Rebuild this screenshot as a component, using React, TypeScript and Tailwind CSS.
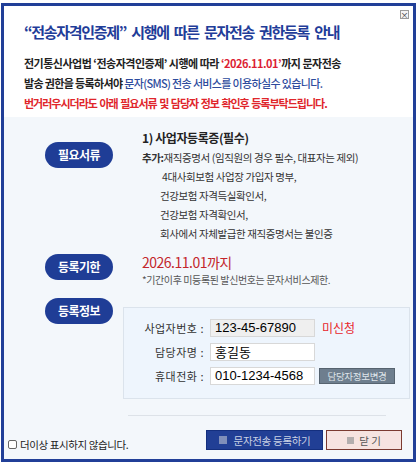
import React from 'react';

const KR = "font-['Noto_Sans_CJK_KR',sans-serif]";

const Pill = ({ label }: { label: string }) => (
  <div className="w-[68px] h-[26px] rounded-full bg-[#1f3d96] text-white text-[12px] font-bold flex items-center justify-center tracking-[-0.5px]">
    {label}
  </div>
);

const Field = ({
  label,
  value,
  gray,
  mono,
}: {
  label: string;
  value: string;
  gray?: boolean;
  mono?: boolean;
}) => (
  <div className="flex items-center">
    <div className="w-[76px] text-right text-[11px] text-[#333] pr-[6px] tracking-[0.5px]">
      {label}
    </div>
    <div
      className={`w-[105px] h-[18px] flex items-center pl-[4px] border border-[#d8d8d8] text-[13px] text-black ${
        gray ? 'bg-[#efefef]' : 'bg-white'
      } ${mono ? "font-['Liberation_Sans',sans-serif]" : ''}`}
    >
      {value}
    </div>
  </div>
);

export default function App() {
  return (
    <div className={`w-[419px] h-[465px] bg-white overflow-hidden ${KR}`}>
      <div className="h-[3px]" />
      <div className="ml-[1px] w-[415px] h-[459px] border-[3px] border-[#213f98] flex flex-col">
        {/* header */}
        <div className="relative bg-white h-[111px] pl-[20px] pt-[14px]">
          <button className="absolute top-[4px] right-[4px] w-[9px] h-[9px] border border-[#9a9a9a] bg-[#f4f4f4] flex items-center justify-center text-[8px] leading-none text-[#333]">
            ×
          </button>
          <h1 className="text-[15px] leading-[24px] font-bold text-[#1f3d99] tracking-[-1.3px] [word-spacing:3px]">
            “전송자격인증제” 시행에 따른 문자전송 권한등록 안내
          </h1>
          <div className="mt-[9px] text-[11px] leading-[20px] font-semibold text-[#222] tracking-[-0.5px]">
            <p>
              전기통신사업법 ‘전송자격인증제’ 시행에 따라{' '}
              <span className="text-[#dc1f34]">‘2026.11.01’</span>까지 문자전송
            </p>
            <p className="tracking-[-0.65px]">
              발송 권한을 등록하셔야{' '}
              <span className="text-[#2d4b9d] font-medium">문자(SMS) 전송 서비스를 이용하실수 있습니다.</span>
            </p>
            <p className="text-[#e0262b] tracking-[-1px] [word-spacing:1px]">
              번거러우시더라도 아래 필요서류 및 담당자 정보 확인후 등록부탁드립니다.
            </p>
          </div>
        </div>

        {/* body */}
        <div className="flex-1 bg-[#f3f7fb] flex flex-col">
          <div className="flex pt-[12px]">
            <div className="w-[138px] pl-[41px] pt-[13px]">
              <Pill label="필요서류" />
            </div>
            <div className="text-[10.5px] leading-[19px] text-[#333] tracking-[-0.4px]">
              <p className="text-[12px] font-bold text-[#222] leading-[17px] mb-[2px]">1) 사업자등록증(필수)</p>
              <p>
                <span className="font-bold">추가:</span>재직증명서 (임직원의 경우 필수, 대표자는 제외)
              </p>
              <p className="pl-[20px]">4대사회보험 사업장 가입자 명부,</p>
              <p className="pl-[18px]">건강보험 자격득실확인서,</p>
              <p className="pl-[18px]">건강보험 자격확인서,</p>
              <p className="pl-[18px]">회사에서 자체발급한 재직증명서는 불인증</p>
            </div>
          </div>

          <div className="flex mt-[10px]">
            <div className="w-[138px] pl-[41px] pt-[1px]">
              <Pill label="등록기한" />
            </div>
            <div>
              <p className="text-[14px] leading-[18px] text-[#c3262b] tracking-[-0.5px]">2026.11.01까지</p>
              <p className="text-[10px] leading-[18px] text-[#555] tracking-[-0.4px]">
                *기간이후 미등록된 발신번호는 문자서비스제한.
              </p>
            </div>
          </div>

          <div className="flex mt-[9px]">
            <div className="w-[119px] pl-[41px]">
              <Pill label="등록정보" />
            </div>
            <div className="mt-[9px] w-[287px] h-[92px] bg-[#eef5fd] border border-[#dbe3ec] pl-[10px] pt-[11px] flex flex-col gap-[6px]">
              <div className="flex items-center">
                <Field label="사업자번호 :" value="123-45-67890" gray mono />
                <span className="ml-[7px] text-[12px] text-[#e8262c]">미신청</span>
              </div>
              <Field label="담당자명 :" value="홍길동" />
              <div className="flex items-center">
                <Field label="휴대전화 :" value="010-1234-4568" mono />
                <button className="ml-[4px] w-[76px] h-[16px] bg-[#6e7e8e] border border-[#56636f] text-[9.5px] text-[#dfe5ea] flex items-center justify-center tracking-[-0.3px]">
                  담당자정보변경
                </button>
              </div>
            </div>
          </div>

          <div className="ml-[124px] mr-[27px] mt-[16px] h-px bg-[#dde2e8]" />

          <div className="flex items-center mt-[12px] pl-[4px] pr-[11px]">
            <label className="flex items-center gap-[3px] text-[10.5px] text-[#222] tracking-[-0.4px] mt-[9px]">
              <span className="w-[9px] h-[9px] border border-[#666] rounded-[2px] bg-white" />
              더이상 표시하지 않습니다.
            </label>
            <div className="ml-auto flex gap-[3px]">
              <button className="w-[117px] h-[20px] bg-[#213f95] border border-[#142f7e] flex items-center justify-center gap-[7px] text-[10.5px] text-[#c9d1e4] tracking-[-0.3px]">
                <span className="w-[8px] h-[8px] bg-[#7f8fba]" />
                문자전송 등록하기
              </button>
              <button className="w-[76px] h-[20px] bg-[#f6e3e0] border-[1.5px] border-[#7b3a30] flex items-center justify-center gap-[5px] text-[10.5px] text-[#555]">
                <span className="w-[7px] h-[7px] bg-[#b3aeae]" />
                닫 기
              </button>
            </div>
          </div>
        </div>
      </div>
    </div>
  );
}
